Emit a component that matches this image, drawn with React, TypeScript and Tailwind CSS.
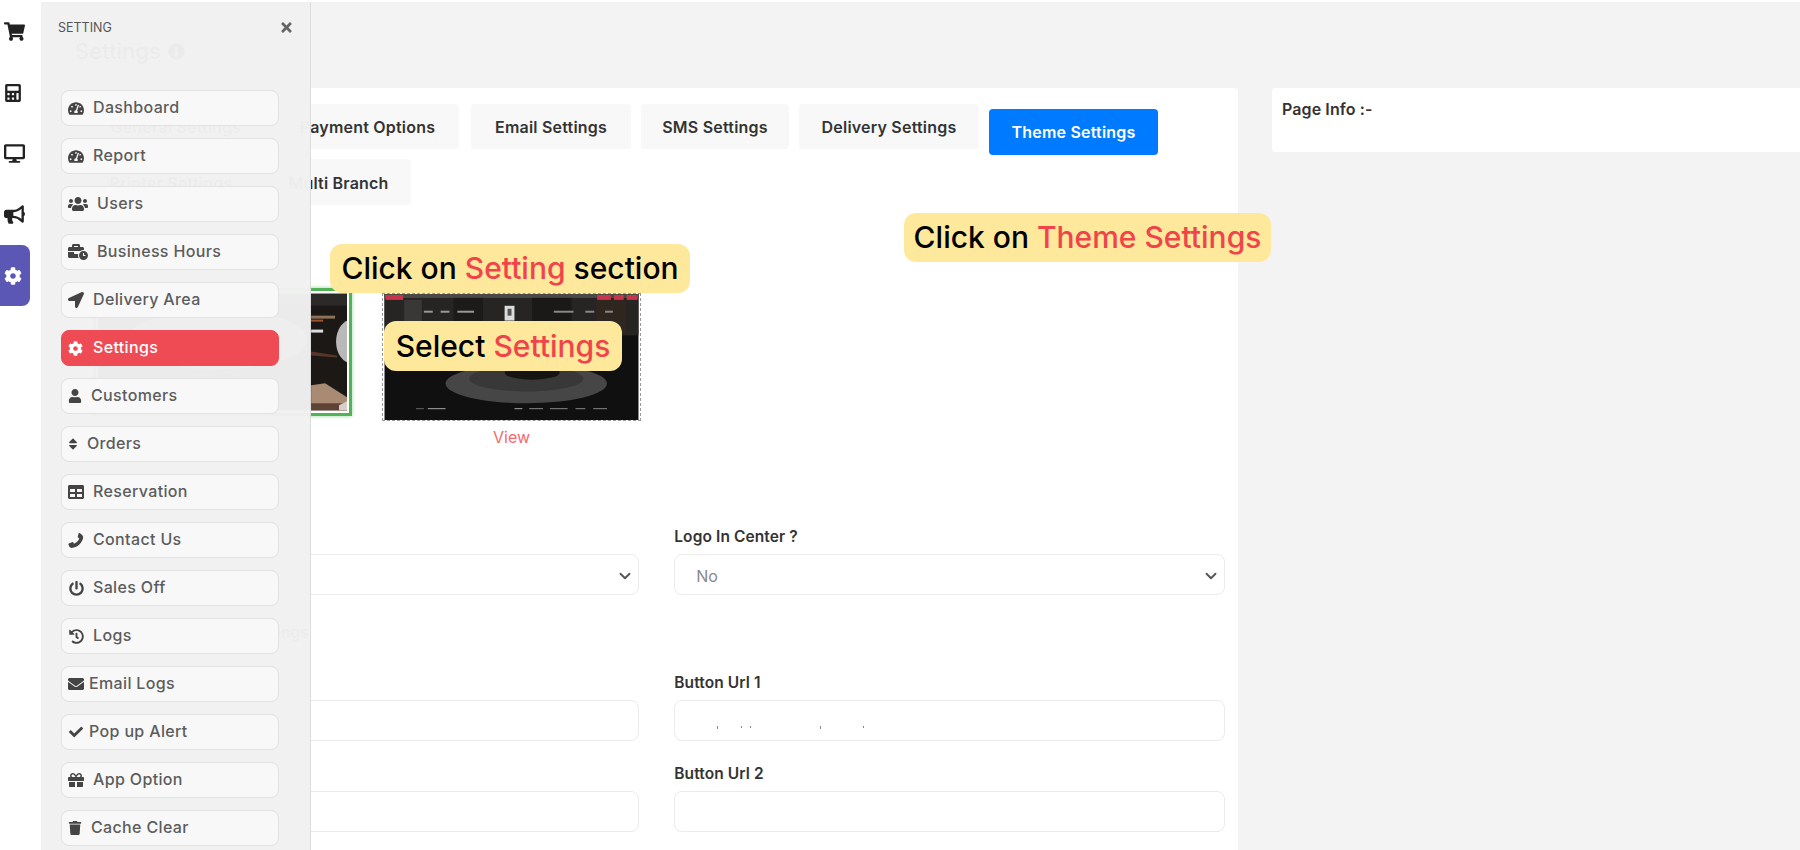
import type { ReactNode } from "react";
import { ChevronDown } from "lucide-react";
import {
  FaBullhorn,
  FaBusinessTime,
  FaCalculator,
  FaCheck,
  FaCog,
  FaDesktop,
  FaEnvelope,
  FaGift,
  FaHistory,
  FaInfoCircle,
  FaLocationArrow,
  FaPowerOff,
  FaShoppingCart,
  FaSort,
  FaTable,
  FaTachometerAlt,
  FaTimes,
  FaTrash,
  FaUser,
  FaUsers,
} from "react-icons/fa";

function PhoneIcon() {
  return (
    <svg viewBox="0 0 24 24" className="h-[17px] w-[17px]" fill="currentColor">
      <path d="M16 1 C17 0.5 18 1 19 1.8 L21.5 4 C23 6 23 8 22 10.5 C19.5 17 14 21.5 7.5 23 C5 23.5 3 23 2 21 L0.8 18.5 C0.3 17.3 1 16.5 2 16 L6 14.5 C7 14.2 7.8 14.5 8.3 15.5 L9 16.8 C12.5 15.5 15.5 12.5 17 9 L15.5 8 C14.6 7.4 14.3 6.6 14.7 5.6 Z" />
    </svg>
  );
}

const railItems = [
  { icon: <FaShoppingCart size={21} />, active: false },
  { icon: <FaCalculator size={18} />, active: false },
  { icon: <FaDesktop size={21} />, active: false },
  { icon: <FaBullhorn size={21} />, active: false },
  { icon: <FaCog size={18} />, active: true },
];

const menuItems = [
  { label: "Dashboard", icon: <FaTachometerAlt size={17} />, box: "w-[16px]", gap: "ml-[9px]" },
  { label: "Report", icon: <FaTachometerAlt size={17} />, box: "w-[16px]", gap: "ml-[9px]" },
  { label: "Users", icon: <FaUsers size={20} />, box: "w-[20px]", gap: "ml-[9px]" },
  { label: "Business Hours", icon: <FaBusinessTime size={20} />, box: "w-[20px]", gap: "ml-[9px]" },
  { label: "Delivery Area", icon: <FaLocationArrow size={16} />, box: "w-[16px]", gap: "ml-[9px]" },
  { label: "Settings", icon: <FaCog size={15} />, box: "w-[15px]", gap: "ml-[10px]", active: true },
  { label: "Customers", icon: <FaUser size={14} />, box: "w-[14px]", gap: "ml-[9px]" },
  { label: "Orders", icon: <FaSort size={14} />, box: "w-[10px]", gap: "ml-[9px]" },
  { label: "Reservation", icon: <FaTable size={16} />, box: "w-[16px]", gap: "ml-[9px]" },
  { label: "Contact Us", icon: <PhoneIcon />, box: "w-[16px]", gap: "ml-[9px]" },
  { label: "Sales Off", icon: <FaPowerOff size={15} />, box: "w-[16px]", gap: "ml-[9px]" },
  { label: "Logs", icon: <FaHistory size={15} />, box: "w-[16px]", gap: "ml-[9px]" },
  { label: "Email Logs", icon: <FaEnvelope size={16} />, box: "w-[16px]", gap: "ml-[5px]" },
  { label: "Pop up Alert", icon: <FaCheck size={14} />, box: "w-[15px]", gap: "ml-[6px]" },
  { label: "App Option", icon: <FaGift size={16} />, box: "w-[16px]", gap: "ml-[9px]" },
  { label: "Cache Clear", icon: <FaTrash size={14} />, box: "w-[14px]", gap: "ml-[9px]" },
];

function Tab({ className, children }: { className: string; children: ReactNode }) {
  return (
    <div
      className={`flex shrink-0 items-center justify-center rounded bg-[#f8f8f8] pt-[1px] text-[16px] font-semibold tracking-[0.2px] text-[#333] ${className}`}
    >
      {children}
    </div>
  );
}

function Field({ label, children }: { label?: string; children?: ReactNode }) {
  return (
    <div>
      <div className="mb-[6px] h-[22px] text-[15.5px] leading-[22px] font-semibold tracking-[0.1px] text-[#333]">
        {label}
      </div>
      <div className="relative flex h-[41px] items-center rounded-lg border border-[#ebebeb] bg-white pt-[2px] pl-[21px] text-[16px] text-[#888]">
        {children}
      </div>
    </div>
  );
}

function Callout({ className, children }: { className: string; children: ReactNode }) {
  return (
    <div
      className={`absolute flex items-center justify-center rounded-xl bg-[#fde89c] text-[30px] font-medium whitespace-nowrap text-black ${className}`}
    >
      {children}
    </div>
  );
}

function DarkTheme() {
  return (
    <svg viewBox="0 0 258 128" className="block h-full w-full">
      <rect width="258" height="128" fill="#111010" />
      <rect width="258" height="42" fill="#262524" />
      <rect width="258" height="4" fill="#4b4947" />
      <rect x="20" y="6" width="18" height="30" fill="#3a3836" />
      <rect x="70" y="4" width="30" height="30" fill="#1c1b1a" />
      <rect x="150" y="4" width="40" height="34" fill="#1a1918" />
      <rect x="215" y="6" width="30" height="34" fill="#302620" />
      <rect x="1" y="1" width="18" height="5" fill="#c8344a" />
      <rect x="216" y="1" width="14" height="5" fill="#c8344a" />
      <rect x="233" y="1" width="10" height="5" fill="#c8344a" />
      <rect x="246" y="1" width="11" height="5" fill="#c8344a" />
      <rect x="122" y="12" width="10" height="15" fill="#dcdcdc" />
      <rect x="125" y="15" width="4" height="7" fill="#555" />
      <rect x="40" y="17" width="9" height="2" fill="#999" />
      <rect x="57" y="17" width="9" height="2" fill="#999" />
      <rect x="74" y="17" width="17" height="2" fill="#999" />
      <rect x="172" y="17" width="20" height="2" fill="#888" />
      <rect x="204" y="17" width="9" height="2" fill="#888" />
      <rect x="224" y="17" width="8" height="2" fill="#888" />
      <ellipse cx="144" cy="91" rx="82" ry="20" fill="#464646" />
      <ellipse cx="144" cy="86" rx="58" ry="13" fill="#383838" />
      <ellipse cx="150" cy="80" rx="28" ry="7" fill="#151413" />
      <rect x="32" y="116" width="8" height="1" fill="#666" />
      <rect x="44" y="116" width="18" height="1" fill="#aaa" />
      <rect x="132" y="116" width="8" height="1" fill="#aaa" />
      <rect x="147" y="116" width="14" height="1" fill="#888" />
      <rect x="168" y="116" width="18" height="1" fill="#888" />
      <rect x="194" y="116" width="10" height="1" fill="#888" />
      <rect x="212" y="116" width="14" height="1" fill="#888" />
    </svg>
  );
}

function FoodTheme() {
  return (
    <svg viewBox="0 0 250 117" className="block h-full w-full">
      <rect width="250" height="117" fill="#1c1816" />
      <rect width="250" height="12" fill="#2c2a28" />
      <ellipse cx="120" cy="46" rx="90" ry="30" fill="#8a8784" />
      <ellipse cx="255" cy="48" rx="16" ry="22" fill="#b9b9b9" />
      <rect x="214" y="22" width="24" height="3" fill="#8a7158" />
      <rect x="214" y="26" width="12" height="2" fill="#a0522d" />
      <rect x="214" y="36" width="12" height="3" fill="#ddd" />
      <path d="M214 58 L240 62 L240 64 L214 62 Z" fill="#5a3528" />
      <path d="M214 92 L228 90 L250 104 L250 117 L214 117 Z" fill="#a98a72" />
      <rect x="214" y="110" width="36" height="7" fill="#5e4236" />
      <path d="M242 112 L250 108 L250 117 L242 117 Z" fill="#d8d0c8" />
    </svg>
  );
}

export default function App() {
  return (
    <div className="relative flex h-[850px] w-[1800px] overflow-hidden bg-[#f3f3f3] pt-[2px] font-['Inter',sans-serif]">
      <div className="absolute inset-x-0 top-0 h-[2px] bg-white" />

      {/* icon rail */}
      <div className="-mt-[3px] flex w-[41px] shrink-0 flex-col bg-white pt-[2px]">
        {railItems.map((item, i) => (
          <div
            key={i}
            className={`flex h-[61px] w-[30px] items-center pl-[4px] ${
              item.active ? "rounded-r-lg bg-[#5b57b5] text-white" : "text-[#222]"
            }`}
          >
            {item.icon}
          </div>
        ))}
      </div>

      {/* page underneath the drawer */}
      <div className="min-w-0 flex-1 pl-[37px]">
        <div className="-ml-[3px] flex h-[86px] items-start gap-[7px] pt-[34px] text-[22px] leading-[30px] font-medium text-[#222]">
          Settings
          <FaInfoCircle size={17} className="mt-[7px]" />
        </div>

        <div className="flex items-start gap-[34px]">
          <div className="h-[800px] w-[1160px] shrink-0 rounded bg-white pt-[16px] pl-[10px]">
            <div className="flex h-[45px] items-start gap-[10px]">
              <Tab className="h-[45px] w-[176px]">General Settings</Tab>
              <Tab className="ml-[2px] h-[45px] w-[183px]">Payment Options</Tab>
              <Tab className="ml-[2px] h-[45px] w-[160px]">Email Settings</Tab>
              <Tab className="h-[45px] w-[148px]">SMS Settings</Tab>
              <Tab className="h-[45px] w-[180px]">Delivery Settings</Tab>
              <div className="mt-[5px] flex h-[46px] w-[169px] items-center justify-center rounded bg-[#007bff] pb-[1px] text-[16px] font-semibold tracking-[0.2px] text-white">
                Theme Settings
              </div>
            </div>
            <div className="mt-[10px] flex gap-[12px]">
              <Tab className="h-[46px] w-[166px]">Printer Settings</Tab>
              <Tab className="h-[46px] w-[145px]">Multi Branch</Tab>
            </div>

            <div className="mt-[83px] ml-[5px] flex items-start gap-[30px]">
              <div className="h-[128px] w-[259px] border-[3px] border-[#52b356] bg-white p-[2px] shadow-[0_0_4px_#9bd69e]">
                <FoodTheme />
              </div>
              <div className="mt-[5px] w-[259px]">
                <div className="h-[128px] border border-dashed border-[#999]">
                  <DarkTheme />
                </div>
                <div className="mt-[4px] text-center text-[16px] leading-[24px] text-[#f46a6a]">View</div>
              </div>
            </div>

            <div className="mt-[77px] ml-[0.5px] grid w-[1136.5px] grid-cols-2 gap-x-[35px]">
              <Field>
                <ChevronDown size={18} strokeWidth={2.5} className="absolute right-[4px] text-[#555]" />
              </Field>
              <Field label="Logo In Center ?">
                No
                <ChevronDown size={18} strokeWidth={2.5} className="absolute right-[4px] text-[#555]" />
              </Field>
              <div className="col-span-2 flex h-[77px] items-center text-[15px] font-semibold tracking-[0.3px] text-[#333]">
                Slider Banner Button Settings
              </div>
              <Field />
              <Field label="Button Url 1">
                <svg viewBox="0 0 150 4" className="absolute top-[25px] left-[41px] h-[4px] w-[150px]">
                  <rect x="1" y="0" width="1" height="3" fill="#888" />
                  <rect x="25" y="0" width="1" height="2" fill="#888" />
                  <rect x="34" y="0" width="1" height="2" fill="#888" />
                  <rect x="104" y="0" width="1" height="3" fill="#888" />
                  <rect x="147" y="0" width="1" height="2" fill="#888" />
                </svg>
              </Field>
              <div className="col-span-2 h-[22px]" />
              <Field />
              <Field label="Button Url 2" />
            </div>
          </div>

          <div className="h-[64px] flex-1 rounded-l bg-white pt-[9px] pl-[10px] text-[16px] leading-[24px] font-semibold tracking-[0.1px] text-[#333]">
            Page Info :-
          </div>
        </div>
      </div>

      {/* settings drawer */}
      <div className="absolute top-[2px] bottom-0 left-[41px] w-[270px] border-r border-[#dcdcdc] bg-[#f1f1f1]/[0.975] px-[20px]">
        <div className="flex h-[88px] items-start justify-between pt-[18px]">
          <span className="-ml-[3px] text-[12.5px] leading-[16px] text-[#555]">SETTING</span>
          <FaTimes size={15} className="-mr-[4px] text-[#666]" />
        </div>
        <div className="flex w-[218px] flex-col gap-[12px]">
          {menuItems.map((item) => (
            <div
              key={item.label}
              className={`flex h-[36px] items-center rounded-lg border pl-[6px] text-[16px] font-medium tracking-[0.35px] ${
                item.active
                  ? "border-[#ef4b55] bg-[#ef4b55] text-white"
                  : "border-[#e2e2e2] bg-[#f8f8f8] text-[#5c5c5c]"
              }`}
            >
              <span className={`flex shrink-0 justify-center ${item.box} ${item.active ? "text-white" : "text-[#444]"}`}>
                {item.icon}
              </span>
              <span className={`pb-[2px] ${item.gap}`}>{item.label}</span>
            </div>
          ))}
        </div>
      </div>

      {/* tutorial callouts */}
      <Callout className="top-[244px] left-[330px] h-[49px] w-[360px]">
        Click on&nbsp;<span className="text-[#f0444a]">Setting</span>&nbsp;section
      </Callout>
      <Callout className="top-[321px] left-[384px] h-[50px] w-[238px]">
        Select&nbsp;<span className="text-[#f0444a]">Settings</span>
      </Callout>
      <Callout className="top-[213px] left-[904px] h-[49px] w-[367px]">
        Click on&nbsp;<span className="text-[#f0444a]">Theme Settings</span>
      </Callout>
    </div>
  );
}
